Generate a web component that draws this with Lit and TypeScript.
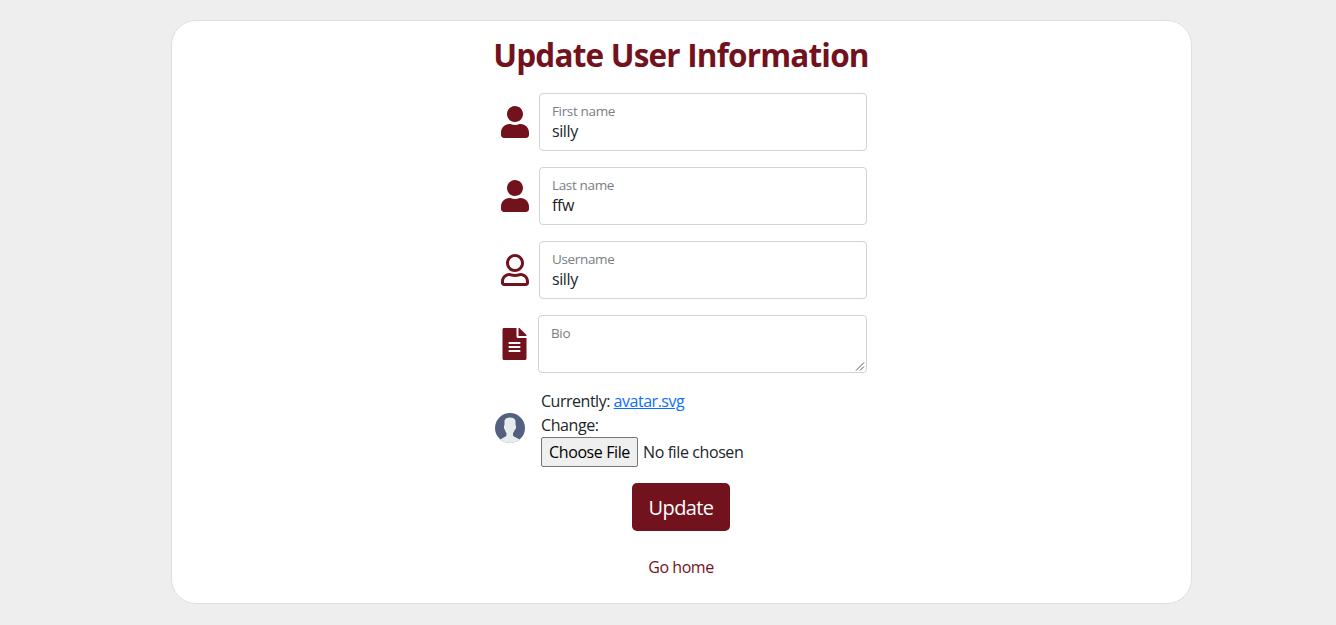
import { LitElement, html, css, svg } from "lit";
import { customElement, property } from "lit/decorators.js";

const USER_SOLID = "M224 256c70.7 0 128-57.3 128-128S294.7 0 224 0 96 57.3 96 128s57.3 128 128 128zm89.6 32h-16.7c-22.2 10.2-46.9 16-72.9 16s-50.6-5.8-72.9-16h-16.7C60.2 288 0 348.2 0 422.4V464c0 26.5 21.5 48 48 48h352c26.5 0 48-21.5 48-48v-41.6c0-74.2-60.2-134.4-134.4-134.4z";
const USER_OUTLINE = "M313.6 304c-28.7 0-42.5 16-89.6 16-47.1 0-60.8-16-89.6-16C60.2 304 0 364.2 0 438.4V464c0 26.5 21.5 48 48 48h352c26.5 0 48-21.5 48-48v-25.6c0-74.2-60.2-134.4-134.4-134.4zM400 464H48v-25.6c0-47.6 38.8-86.4 86.4-86.4 14.6 0 38.3 16 89.6 16 51.7 0 74.9-16 89.6-16 47.6 0 86.4 38.8 86.4 86.4V464zM224 288c79.5 0 144-64.5 144-144S303.5 0 224 0 80 64.5 80 144s64.5 144 144 144zm0-240c52.9 0 96 43.1 96 96s-43.1 96-96 96-96-43.1-96-96 43.1-96 96-96z";
const FILE_LINES = "M224 136V0H24C10.7 0 0 10.7 0 24v464c0 13.3 10.7 24 24 24h336c13.3 0 24-10.7 24-24V160H248c-13.2 0-24-10.8-24-24zm64 236c0 6.6-5.4 12-12 12H108c-6.6 0-12-5.4-12-12v-8c0-6.6 5.4-12 12-12h168c6.6 0 12 5.4 12 12v8zm0-64c0 6.6-5.4 12-12 12H108c-6.6 0-12-5.4-12-12v-8c0-6.6 5.4-12 12-12h168c6.6 0 12 5.4 12 12v8zm0-72v8c0 6.6-5.4 12-12 12H108c-6.6 0-12-5.4-12-12v-8c0-6.6 5.4-12 12-12h168c6.6 0 12 5.4 12 12zm96-114.1v6.1H256V0h6.1c6.4 0 12.5 2.5 17 7l97.9 98c4.5 4.5 7 10.6 7 16.9z";

@customElement("form-field")
class FormField extends LitElement {
  @property() label = "";
  @property() value = "";
  @property() icon = "";
  @property({ type: Boolean }) multiline = false;

  static styles = css`
    :host { display: flex; align-items: center; height: 58px; margin-bottom: 16px; }
    .icon { width: 28px; height: 32px; margin: 0 10px 0 6px; fill: #72121d; flex: none; }
    .icon.wide { margin: 0 9px 0 6px; }
    .box {
      flex: 1; box-sizing: border-box; height: 58px; position: relative;
      border: 1px solid #ced4da; border-radius: 4px; background: #fff;
      padding: 8px 12px 0; color: #212529;
    }
    .label { font-size: 13.5px; line-height: 18px; color: #7a7e82; letter-spacing: -0.35px; }
    .value { font-size: 16px; line-height: 23px; letter-spacing: -0.4px; }
    .grip { position: absolute; right: 0; bottom: 0; width: 12px; height: 12px; }
  `;

  render() {
    return html`
      <svg class="icon ${this.multiline ? "wide" : ""}" viewBox="${this.multiline ? "-24 0 448 512" : "0 0 448 512"}">
        <path d=${this.icon}></path>
      </svg>
      <div class="box">
        <div class="label">${this.label}</div>
        <div class="value">${this.value}</div>
        ${this.multiline
          ? html`<svg class="grip" viewBox="0 0 12 12" stroke="#555" stroke-width="1" fill="none">
              ${svg`<path d="M2 10.5 10 2.5M6 10.5 10 6.5"></path>`}
            </svg>`
          : ""}
      </div>
    `;
  }
}

@customElement("app-root")
class AppRoot extends LitElement {
  static styles = css`
    :host {
      display: block; box-sizing: border-box; height: 625px; padding: 20px 0 0 171px;
      background: #eee; color: #212529;
      font-family: "Open Sans", "Noto Sans", sans-serif; font-size: 16px; line-height: 24px;
    }
    .card {
      box-sizing: border-box; width: 1021px; height: 584px; background: #fff;
      border: 1px solid #dfdfdf; border-radius: 25px;
      display: flex; flex-direction: column; align-items: center; padding: 14px 1px 0 0;
    }
    h1 {
      margin: 0 0 19px; font-size: 31.5px; line-height: 39px; font-weight: 700;
      color: #72121d; white-space: nowrap; letter-spacing: -0.82px;
    }
    .form { width: 372px; }
    .upload { display: flex; align-items: center; height: 78px; white-space: nowrap; }
    .avatar { width: 30px; height: 30px; margin-right: 16px; }
    .text { letter-spacing: -0.4px; }
    .current { letter-spacing: -0.48px; }
    .link { color: #0d6efd; text-decoration: underline; }
    .file { display: flex; align-items: center; height: 30px; gap: 5px; }
    .choose {
      box-sizing: border-box; width: 97px; height: 30px; padding: 0; flex: none;
      border: 1px solid #767676; border-radius: 2px; background: #efefef; color: #000;
      font: inherit; letter-spacing: -0.4px;
    }
    .submit {
      width: 98px; height: 48px; margin-top: 16px; padding: 2px 0 0; border: 0; border-radius: 5px;
      background: #72121d; color: #fff; font: inherit; font-size: 20px; letter-spacing: -0.6px;
    }
    .home { margin-top: 24px; color: #72121d; text-decoration: none; letter-spacing: -0.45px; }
  `;

  render() {
    return html`
      <main class="card">
        <h1>Update User Information</h1>
        <div class="form">
          <form-field label="First name" value="silly" .icon=${USER_SOLID}></form-field>
          <form-field label="Last name" value="ffw" .icon=${USER_SOLID}></form-field>
          <form-field label="Username" value="silly" .icon=${USER_OUTLINE}></form-field>
          <form-field label="Bio" multiline .icon=${FILE_LINES}></form-field>
          <div class="upload">
            <svg class="avatar" viewBox="0 0 53 53">
              <circle cx="26.5" cy="26.5" r="26.5" fill="#556080"></circle>
              <path fill="#e7eced" d="M18.613,41.552l-7.907,4.313c-0.464,0.253-0.881,0.564-1.269,0.903C14.047,50.655,19.998,53,26.5,53c6.454,0,12.367-2.31,16.964-6.144c-0.424-0.358-0.884-0.68-1.394-0.934l-8.467-4.233c-1.094-0.547-1.785-1.665-1.785-2.888v-3.322c0.238-0.271,0.51-0.619,0.801-1.03c1.154-1.63,2.027-3.423,2.632-5.304c1.086-0.335,1.886-1.338,1.886-2.53v-3.546c0-0.78-0.347-1.477-0.886-1.965v-5.126c0,0,1.053-7.977-9.75-7.977s-9.75,7.977-9.75,7.977v5.126c-0.54,0.488-0.886,1.185-0.886,1.965v3.546c0,0.934,0.491,1.756,1.226,2.231c0.886,3.857,3.206,6.633,3.206,6.633v3.24C20.296,39.899,19.65,40.986,18.613,41.552z"></path>
            </svg>
            <div class="text">
              <div class="current">Currently: <a class="link">avatar.svg</a></div>
              <div>Change:</div>
              <div class="file"><button class="choose">Choose File</button><span>No file chosen</span></div>
            </div>
          </div>
        </div>
        <button class="submit">Update</button>
        <a class="home">Go home</a>
      </main>
    `;
  }
}
